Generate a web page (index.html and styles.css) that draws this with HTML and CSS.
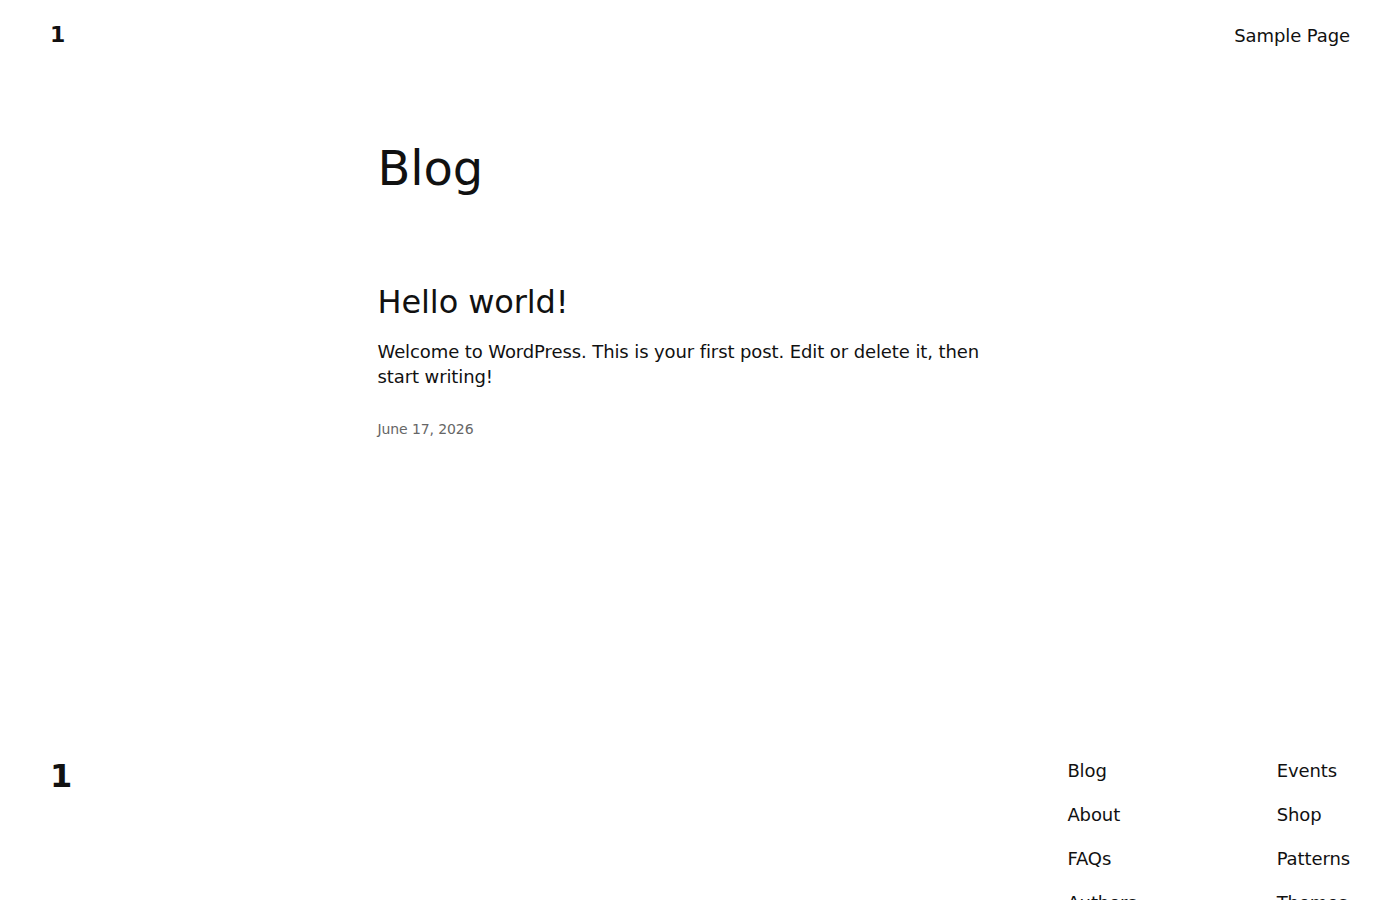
FILE: index.html
```html
<!DOCTYPE html>
<html lang="en">
<head>
<meta charset="utf-8">
<title>Blog – 1</title>
<link rel="stylesheet" href="styles.css">
</head>
<body>
<header class="site-header">
  <p class="site-title"><a href="#">1</a></p>
  <nav class="header-nav"><a href="#">Sample Page</a></nav>
</header>
<main class="site-main">
  <h1 class="page-title">Blog</h1>
  <article class="post">
    <h2 class="post-title"><a href="#">Hello world!</a></h2>
    <p class="post-excerpt">Welcome to WordPress. This is your first post. Edit or delete it, then start writing!</p>
    <p class="post-date"><time datetime="2026-06-17">June 17, 2026</time></p>
  </article>
</main>
<footer class="site-footer">
  <p class="footer-title"><a href="#">1</a></p>
  <div class="footer-navs">
    <ul class="footer-nav">
      <li><a href="#">Blog</a></li>
      <li><a href="#">About</a></li>
      <li><a href="#">FAQs</a></li>
      <li><a href="#">Authors</a></li>
    </ul>
    <ul class="footer-nav">
      <li><a href="#">Events</a></li>
      <li><a href="#">Shop</a></li>
      <li><a href="#">Patterns</a></li>
      <li><a href="#">Themes</a></li>
    </ul>
  </div>
</footer>
</body>
</html>
```

FILE: styles.css
```css
html, body {
  margin: 0;
  padding: 0;
  background: #ffffff;
}

body {
  font-family: "DejaVu Sans", sans-serif;
  color: #111111;
  font-size: 18px;
  line-height: 1.4;
  letter-spacing: -0.1px;
}

a {
  color: inherit;
  text-decoration: none;
}

.site-header {
  display: flex;
  justify-content: space-between;
  align-items: center;
  padding: 20px 50px;
}

.site-title {
  margin: 0;
  font-size: 22px;
  font-weight: 700;
}

.header-nav {
  font-size: 18px;
}

.site-main {
  max-width: 645px;
  margin: 0 auto;
  padding: 69px 0 315px;
}

.page-title {
  margin: 0;
  font-size: 48px;
  font-weight: 400;
  line-height: 1.2;
}

.post {
  margin-top: 86px;
}

.post-title {
  margin: 0;
  font-size: 32px;
  font-weight: 400;
  line-height: 1.2;
}

.post-excerpt {
  margin: 17px 0 0;
  font-size: 18px;
  line-height: 1.4;
}

.post-date {
  margin: 31px 0 0;
  font-size: 14px;
  color: #666666;
}

.site-footer {
  display: flex;
  justify-content: space-between;
  align-items: flex-start;
  padding: 0 50px 50px;
}

.footer-title {
  margin: 2px 0 0;
  font-size: 32px;
  font-weight: 700;
  line-height: 1.2;
}

.footer-navs {
  display: flex;
  gap: 140px;
  padding-top: 3px;
}

.footer-nav {
  list-style: none;
  margin: 0;
  padding: 0;
  display: flex;
  flex-direction: column;
  gap: 19px;
  font-size: 18px;
  line-height: 25px;
}
```
